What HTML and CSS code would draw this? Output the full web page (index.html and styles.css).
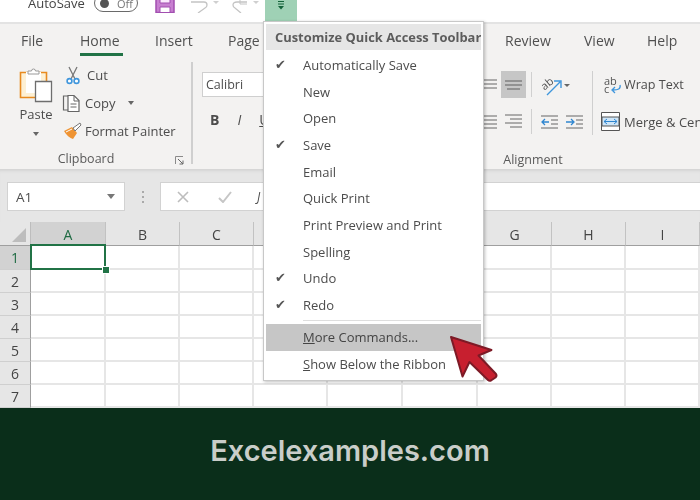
FILE: index.html
```html
<!DOCTYPE html>
<html lang="en">
<head>
<meta charset="utf-8">
<title>Customize Quick Access Toolbar</title>
<link rel="stylesheet" href="styles.css">
</head>
<body>
<div class="page">
  <div class="app">
    <header class="qat">
      <div class="qat-row">
        <span class="autosave">AutoSave</span>
        <span class="toggle"><i class="knob"></i><span>Off</span></span>
        <svg class="qat-save" width="20" height="20" viewBox="0 0 20 20"><path d="M1 0h18v19.500H1z" fill="#c77fd0" stroke="#a24fb0" stroke-width="1.500"/><path d="M5 14h10v5.500H5z" fill="#fff" stroke="#a24fb0"/><path d="M5 2h10v8H5z" fill="#fbeafd" stroke="#a24fb0"/></svg>
        <svg class="qat-undo" width="28" height="20" viewBox="0 0 28 20"><path d="M0 9h13q3 0 3 3 0 2-2 3l-7 5" fill="none" stroke="#c4c4c4" stroke-width="1.300"/><path d="M22 8h6l-3 3z" fill="#cfcfcf"/></svg>
        <svg class="qat-redo" width="28" height="20" viewBox="0 0 28 20"><path d="M16 9H6q-4 0-4 3 0 2 2 3l6 5" fill="none" stroke="#c4c4c4" stroke-width="1.300"/><path d="M9 5v6h7" fill="none" stroke="#c4c4c4"/><path d="M22 8h6l-3 3z" fill="#cfcfcf"/></svg>
        <div class="qat-more">
          <svg width="8" height="9" viewBox="0 0 8 9"><path d="M1 .5h6M1 3h6" stroke="#14633a" stroke-width="1"/><path d="M1 5h6L4 8.500z" fill="#14633a"/></svg>
        </div>
      </div>
    </header>

    <section class="ribbon">
      <nav class="tabs">
        <span>File</span>
        <span class="tab-active">Home</span>
        <span>Insert</span>
        <span>Page Layout</span>
        <span>Review</span>
        <span>View</span>
        <span>Help</span>
      </nav>
      <div class="groups">
        <div class="group group-clipboard">
          <div class="group-body">
            <div class="paste">
              <svg width="34" height="37" viewBox="0 0 34 37"><path d="M1.500 5.500h26v25h-26z" fill="#fdf0d4" stroke="#e88a1f" stroke-width="1.600"/><path d="M7 5h15v21H7z" fill="#fff"/><path d="M9 7V4h3.500a2 2 0 0 1 4 0H20v3z" fill="#fff" stroke="#9a9a9a"/><path d="M16.500 14.500h16v20h-16z" fill="#fff" stroke="#6e6e6e" stroke-width="1.300"/></svg>
              <span>Paste</span>
              <i class="caret"></i>
            </div>
            <div class="clip-actions">
              <div class="clip-row">
                <svg width="14" height="19" viewBox="0 0 14 19"><path d="M3 1l6 12M11 1L5 13" stroke="#777" stroke-width="1.300" fill="none"/><circle cx="3.500" cy="15" r="2.400" fill="#fff" stroke="#3f96dc" stroke-width="1.600"/><circle cx="10.500" cy="15" r="2.400" fill="#fff" stroke="#3f96dc" stroke-width="1.600"/></svg>
                <span>Cut</span>
              </div>
              <div class="clip-row">
                <svg width="19" height="19" viewBox="0 0 19 19"><path d="M6 2H1.500v14H6" fill="none" stroke="#666" stroke-width="1.200"/><path d="M6 1.500h6l5 5v11H6z" fill="#fff" stroke="#666" stroke-width="1.200"/><path d="M12 2v5h5M8.500 10h6M8.500 13h6" fill="none" stroke="#666"/></svg>
                <span>Copy</span>
                <i class="caret caret-copy"></i>
              </div>
              <div class="clip-row">
                <svg width="19" height="18" viewBox="0 0 19 18"><path d="M1 9l8-4 5 6-4 6c-3-1-7-4-9-8z" fill="#ef9433"/><path d="M3 10l6-3" stroke="#fff"/><path d="M10 6l7-5 1 2-6 6z" fill="#fff" stroke="#777"/></svg>
                <span>Format Painter</span>
              </div>
            </div>
          </div>
          <div class="group-label label-clipboard">
            <span>Clipboard</span>
            <svg class="launcher" width="9" height="9" viewBox="0 0 9 9"><path d="M.5 8V.5H8" fill="none" stroke="#8a8a8a"/><path d="M3 3l5 5M8 4.500V8H4.500" fill="none" stroke="#666"/></svg>
          </div>
        </div>

        <div class="group group-font">
          <div class="font-name">Calibri</div>
          <div class="font-styles">
            <b>B</b><i>I</i><u>U</u>
          </div>
        </div>

        <div class="group group-align">
          <div class="align-body">
            <div class="align-row">
              <svg class="lines" width="14" height="14" viewBox="0 0 14 14"><path d="M1 2h13M1 6h13M1 10h13" stroke="#666"/></svg>
              <span class="align-on"><svg width="17" height="12" viewBox="0 0 17 12"><path d="M0 2h17M0 6h17M2 10h13" stroke="#5e5e5e"/></svg></span>
              <i class="vsep"></i>
              <svg class="orient" width="30" height="24" viewBox="0 0 30 24"><text x="1" y="14" class="ab" transform="rotate(-40 8 11)">ab</text><path d="M7 22L20 9M14 8h7v7" fill="none" stroke="#3f96dc" stroke-width="1.400"/><path d="M24 11h6l-3 3z" fill="#666"/></svg>
              <i class="vsep vsep-major"></i>
              <svg class="wrap-icon" width="18" height="18" viewBox="0 0 18 18"><text x="0" y="9" class="ab">ab</text><text x="0" y="17" class="ab">c</text><path d="M16 9c1 4-2 5-7 5M11 11l-3 3 3 3" fill="none" stroke="#3f96dc" stroke-width="1.300"/></svg>
              <span class="align-text">Wrap Text</span>
            </div>
            <div class="align-row">
              <svg class="lines" width="14" height="14" viewBox="0 0 14 14"><path d="M1 1h13M1 5h13M1 9h13M1 13h13" stroke="#666"/></svg>
              <svg class="lines-right" width="17" height="15" viewBox="0 0 17 15"><path d="M0 1h17M5 5h12M0 9h17M5 13h12" stroke="#666"/></svg>
              <i class="vsep vsep-2"></i>
              <svg class="indent" width="17" height="14" viewBox="0 0 17 14"><path d="M0 1h17M10 5h7M10 9h7M0 13h17" stroke="#666"/><path d="M8 7H1M4 4L1 7l3 3" fill="none" stroke="#2f86d0" stroke-width="1.300"/></svg>
              <svg class="indent indent-2" width="17" height="14" viewBox="0 0 17 14"><path d="M0 1h17M10 5h7M10 9h7M0 13h17" stroke="#666"/><path d="M0 7h7M5 4l3 3-3 3" fill="none" stroke="#2f86d0" stroke-width="1.300"/></svg>
              <i class="vsep vsep-major vsep-3"></i>
              <svg class="merge-icon" width="19" height="19" viewBox="0 0 19 19"><path d="M.5.500h18v18H.5z" fill="#fff" stroke="#555"/><path d="M1 5h17v9H1z" fill="#cfe6f8" stroke="#555"/><path d="M3 9.500h13M6 7L3 9.500 6 12M13 7l3 2.500L13 12" fill="none" stroke="#2f86d0"/></svg>
              <span class="align-text">Merge &amp; Center</span>
            </div>
          </div>
          <div class="group-label label-align">Alignment</div>
        </div>
      </div>
    </section>

    <section class="formula-band">
      <div class="name-box"><span>A1</span><i class="caret caret-name"></i></div>
      <div class="dots"><i></i><i></i><i></i></div>
      <div class="formula-input">
        <svg width="12" height="12" viewBox="0 0 12 12"><path d="M1 1l10 10M11 1L1 11" stroke="#bdbdbd" stroke-width="1.600"/></svg>
        <svg class="fx-check" width="14" height="12" viewBox="0 0 14 12"><path d="M1 7l4 4 8-10" fill="none" stroke="#c6c6c6" stroke-width="2"/></svg>
        <span class="fx">J</span>
      </div>
    </section>

    <section class="sheet">
      <div class="corner"><i></i></div>
      <div class="col col-on">A</div><div class="col">B</div><div class="col">C</div><div class="col">D</div><div class="col">E</div><div class="col">F</div><div class="col">G</div><div class="col">H</div><div class="col">I</div>

      <div class="row row-on">1</div><div class="cell cell-on"><i class="handle"></i></div><div class="cell"></div><div class="cell"></div><div class="cell"></div><div class="cell"></div><div class="cell"></div><div class="cell"></div><div class="cell"></div><div class="cell"></div>
      <div class="row">2</div><div class="cell"></div><div class="cell"></div><div class="cell"></div><div class="cell"></div><div class="cell"></div><div class="cell"></div><div class="cell"></div><div class="cell"></div><div class="cell"></div>
      <div class="row">3</div><div class="cell"></div><div class="cell"></div><div class="cell"></div><div class="cell"></div><div class="cell"></div><div class="cell"></div><div class="cell"></div><div class="cell"></div><div class="cell"></div>
      <div class="row">4</div><div class="cell"></div><div class="cell"></div><div class="cell"></div><div class="cell"></div><div class="cell"></div><div class="cell"></div><div class="cell"></div><div class="cell"></div><div class="cell"></div>
      <div class="row">5</div><div class="cell"></div><div class="cell"></div><div class="cell"></div><div class="cell"></div><div class="cell"></div><div class="cell"></div><div class="cell"></div><div class="cell"></div><div class="cell"></div>
      <div class="row">6</div><div class="cell"></div><div class="cell"></div><div class="cell"></div><div class="cell"></div><div class="cell"></div><div class="cell"></div><div class="cell"></div><div class="cell"></div><div class="cell"></div>
      <div class="row">7</div><div class="cell"></div><div class="cell"></div><div class="cell"></div><div class="cell"></div><div class="cell"></div><div class="cell"></div><div class="cell"></div><div class="cell"></div><div class="cell"></div>
    </section>

    <div class="menu">
      <div class="menu-title">Customize Quick Access Toolbar</div>
      <ul class="menu-list">
        <li class="checked">Automatically Save</li>
        <li>New</li>
        <li>Open</li>
        <li class="checked">Save</li>
        <li>Email</li>
        <li>Quick Print</li>
        <li>Print Preview and Print</li>
        <li>Spelling</li>
        <li class="checked">Undo</li>
        <li class="checked">Redo</li>
      </ul>
      <div class="menu-sep"></div>
      <div class="menu-item menu-hot"><u>M</u>ore Commands...</div>
      <div class="menu-item"><u>S</u>how Below the Ribbon</div>
    </div>
  </div>

  <svg class="pointer" width="60" height="58" viewBox="445 330 60 58"><path d="M451 337L491.500 350 478.500 355.500 496 374c1 1.500.5 2.500-.5 3.500l-4.500 3c-1 .5-2 .5-3-.5L469.500 362 462.500 376.500z" fill="#c71f2f" stroke="#7d1a26" stroke-width="2" stroke-linejoin="round"/></svg>

  <footer class="footer">Excelexamples.com</footer>
</div>
</body>
</html>
```

FILE: styles.css
```css
* { box-sizing: border-box; }
html, body { margin: 0; padding: 0; background: #fff; }
ul { list-style: none; margin: 0; padding: 0; }

.page {
  position: relative;
  width: 700px;
  height: 500px;
  overflow: hidden;
  font-family: "Open Sans", "Noto Sans", sans-serif;
  color: #4c4c4c;
  font-size: 13px;
}
.app {
  position: relative;
  height: 408px;
  overflow: hidden;
  filter: blur(0.35px);
}

/* Quick access toolbar */
.qat { height: 22px; background: #fff; padding-left: 28px; }
.qat-row { display: flex; align-items: center; height: 6px; }
.autosave { width: 66px; font-size: 13px; color: #444; }
.toggle {
  display: flex;
  align-items: center;
  flex: none;
  width: 44px;
  height: 18px;
  border: 1.500px solid #6a6a6a;
  border-radius: 9px;
  padding-left: 5px;
  font-size: 11px;
  color: #777;
}
.knob { width: 9px; height: 9px; border-radius: 50%; background: #555; margin-right: 8px; }
.qat-save { flex: none; margin-left: 17px; }
.qat-undo { flex: none; margin-left: 16px; }
.qat-redo { flex: none; margin-left: 12px; }
.qat-more {
  flex: none;
  align-self: flex-start;
  display: flex;
  justify-content: center;
  width: 32px;
  height: 21px;
  margin-left: 6px;
  padding-top: 1px;
  background: #9fd1b5;
}

/* Ribbon */
.ribbon {
  height: 148px;
  background: #f3f2f1;
  border-top: 2px solid #e3e3e3;
  box-shadow: inset 0 -1px 0 #d6d6d6;
}
.tabs {
  display: grid;
  grid-template-columns: 59px 75px 73px 277px 79px 63px 1fr;
  height: 32px;
  padding: 1px 0 0 21px;
  align-items: center;
  font-size: 14px;
  color: #505050;
  white-space: nowrap;
}
.tab-active { position: relative; }
.tab-active::after {
  content: "";
  position: absolute;
  left: 0;
  top: 22px;
  width: 43px;
  height: 3px;
  background: #217346;
}
.groups { display: flex; height: 114px; padding-top: 6px; }
.group { flex: none; display: flex; flex-direction: column; }
.group-clipboard { width: 193px; border-right: 2px solid #cfcfcf; height: 102px; }
.group-body { display: flex; height: 90px; padding-left: 18px; }
.group-label {
  position: relative;
  height: 12px;
  text-align: center;
  font-size: 12.500px;
  line-height: 14px;
  color: #5a5a5a;
}
.label-clipboard { padding-right: 19px; }
.launcher { position: absolute; right: 7px; top: 4px; }
.paste {
  display: flex;
  flex-direction: column;
  align-items: center;
  width: 36px;
  padding-top: 5px;
  font-size: 13px;
}
.paste span { margin-top: 1px; }
.caret {
  display: block;
  width: 0;
  height: 0;
  border-left: 3.500px solid transparent;
  border-right: 3.500px solid transparent;
  border-top: 4px solid #666;
}
.paste .caret { margin-top: 9px; }
.clip-actions { margin: -1px 0 0 8px; display: flex; flex-direction: column; }
.clip-row {
  display: flex;
  align-items: center;
  height: 28px;
  font-size: 13px;
  white-space: nowrap;
}
.clip-row svg { flex: none; }
.clip-row:nth-child(1) svg { margin: 0 7px 0 4px; }
.clip-row:nth-child(2) svg { margin: 0 4px 0 0; }
.clip-row:nth-child(3) svg { margin: 0 3px 0 1px; }
.clip-row:nth-child(3) { height: 27px; }
.caret-copy { margin-left: 13px; }

.group-font { width: 248px; padding: 10px 0 0 9px; }
.font-name {
  width: 120px;
  height: 25px;
  border: 1px solid #cfcfcf;
  background: #fff;
  padding-left: 3px;
  font-size: 12.500px;
  line-height: 23px;
}
.font-styles {
  display: flex;
  gap: 18px;
  padding: 13px 0 0 8px;
  font-size: 14px;
}

.group-align { width: 260px; }
.align-body { height: 81px; padding-top: 9px; }
.align-row { display: flex; align-items: center; height: 27px; margin-bottom: 10px; }
.lines { flex: none; margin-left: 42px; }
.align-on {
  flex: none;
  display: flex;
  align-items: center;
  justify-content: center;
  width: 25px;
  height: 27px;
  margin-left: 4px;
  background: #c6c6c6;
}
.vsep { flex: none; width: 1px; height: 25px; margin-left: 5px; background: #d0d0d0; }
.orient { flex: none; margin-left: 8px; }
.vsep-major { height: 42px; margin-left: 22px; align-self: flex-start; background: #cfcfcf; }
.ab { font-size: 11px; fill: #555; }
.wrap-icon { flex: none; margin-left: 11px; }
.align-text { margin-left: 2px; font-size: 12.600px; white-space: nowrap; }
.lines-right { flex: none; margin-left: 8px; }
.vsep-2 { margin-left: 9px; }
.indent { flex: none; margin-left: 9px; }
.indent-2 { margin-left: 8px; }
.vsep-3 { margin-left: 9px; height: 26px; align-self: center; }
.merge-icon { flex: none; margin-left: 8px; }
.merge-icon + .align-text { margin-left: 4px; font-size: 13px; }
.label-align { width: 184px; margin-top: 10px; }

/* Formula band */
.formula-band {
  display: flex;
  height: 52px;
  padding: 12px 0 11px 7px;
  background: #e6e6e6;
  box-shadow: inset 0 3px 3px -2px #d4d4d4;
}
.name-box {
  display: flex;
  align-items: center;
  justify-content: space-between;
  width: 118px;
  padding: 0 9px 0 8px;
  background: #fff;
  border: 1px solid #d2d2d2;
  font-size: 13.500px;
}
.caret-name { border-left-width: 4.500px; border-right-width: 4.500px; border-top-width: 5px; border-top-color: #777; }
.dots { display: flex; flex-direction: column; justify-content: center; gap: 3px; width: 35px; align-items: center; }
.dots i { width: 2px; height: 2px; background: #aaa; }
.formula-input {
  display: flex;
  align-items: center;
  flex: 1;
  padding-left: 16px;
  background: #fff;
  border: 1px solid #d2d2d2;
  border-right: 0;
}
.fx-check { margin-left: 29px; }
.fx { margin-left: 25px; font-size: 12px; font-style: italic; }

/* Sheet */
.sheet {
  display: grid;
  grid-template-columns: 31px 75px 74px 74px 74px 75px 75px 74px 74px 74px;
  grid-template-rows: 24px 24px 23px 23px 23px 23px 23px 23px;
  height: 186px;
  background: #fff;
}
.corner { position: relative; background: #e6e6e6; border-bottom: 1px solid #9f9f9f; border-right: 1px solid #bdbdbd; }
.corner i {
  position: absolute;
  right: 4px;
  bottom: 3px;
  width: 0;
  height: 0;
  border-left: 14px solid transparent;
  border-bottom: 14px solid #bdbdbd;
}
.col {
  display: flex;
  align-items: flex-end;
  justify-content: center;
  background: #e6e6e6;
  border-bottom: 1px solid #9f9f9f;
  border-right: 1px solid #c2c2c2;
  font-size: 14px;
  line-height: 20px;
  color: #444;
}
.col-on { background: #d2d2d2; color: #1f6b43; }
.row {
  display: flex;
  align-items: center;
  justify-content: center;
  background: #e6e6e6;
  border-right: 1px solid #9f9f9f;
  border-bottom: 1px solid #cfcfcf;
  font-size: 14px;
  color: #444;
}
.row-on { background: #d2d2d2; color: #1f6b43; }
.cell { border-right: 2px solid #e6e6e6; border-bottom: 2px solid #e6e6e6; }
.cell-on { position: relative; margin: -2px 0 0 -1px; border: 2px solid #217346; }
.handle {
  position: absolute;
  right: -5px;
  bottom: -5px;
  width: 6px;
  height: 6px;
  background: #217346;
  outline: 1px solid #fff;
}

/* Drop-down menu */
.menu {
  position: absolute;
  left: 263px;
  top: 21px;
  width: 221px;
  height: 360px;
  padding: 2px;
  background: #fff;
  border: 1px solid #c8c8c8;
  box-shadow: 1px 1px 3px rgba(0, 0, 0, 0.25);
}
.menu-title {
  height: 26px;
  padding-left: 9px;
  background: #e6e6e6;
  font-size: 12.900px;
  font-weight: 700;
  line-height: 26px;
  color: #5c5c5c;
  white-space: nowrap;
}
.menu-list { padding-top: 2px; }
.menu-list li {
  position: relative;
  height: 26.660px;
  padding-left: 37px;
  line-height: 26.660px;
  font-size: 13px;
}
.menu-list .checked::before {
  content: "\2714";
  position: absolute;
  left: 9px;
  top: 0;
  font-family: "DejaVu Sans", sans-serif;
  font-size: 13px;
  color: #555;
}
.menu-sep { height: 1px; margin: 1px 0 3px 37px; background: #dedede; }
.menu-item { height: 27px; padding-left: 37px; line-height: 27px; font-size: 13px; }
.menu-hot { background: #c6c6c6; color: #444; }

/* Overlay pointer */
.pointer { position: absolute; left: 445px; top: 330px; }

/* Footer */
.footer {
  height: 92px;
  background: #0a2e1a;
  color: #c9cdc9;
  text-align: center;
  font-family: "Inter", "Open Sans", sans-serif;
  font-size: 29px;
  font-weight: 600;
  line-height: 86px;
}
```
